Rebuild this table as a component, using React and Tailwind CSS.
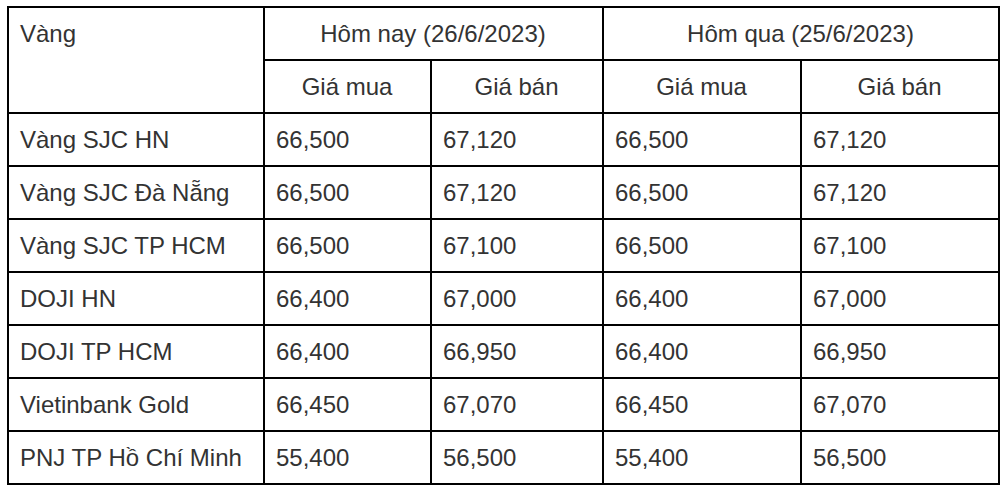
import React from "react";

const rows = [
  ["Vàng SJC HN", "66,500", "67,120", "66,500", "67,120"],
  ["Vàng SJC Đà Nẵng", "66,500", "67,120", "66,500", "67,120"],
  ["Vàng SJC TP HCM", "66,500", "67,100", "66,500", "67,100"],
  ["DOJI HN", "66,400", "67,000", "66,400", "67,000"],
  ["DOJI TP HCM", "66,400", "66,950", "66,400", "66,950"],
  ["Vietinbank Gold", "66,450", "67,070", "66,450", "67,070"],
  ["PNJ TP Hồ Chí Minh", "55,400", "56,500", "55,400", "56,500"],
];

export default function App() {
  const cell = "border-2 border-black pl-[11px] pr-3 py-3 h-[53px] align-middle";
  return (
    <div className="w-[1007px] h-[490px] bg-white pt-[6px] pl-[7px] text-[#333] text-[24px] leading-[27px] [font-family:'Liberation_Sans',Arial,sans-serif]">
      <table className="table-fixed border-collapse w-[991px]">
        <colgroup>
          <col className="w-[256px]" />
          <col className="w-[167px]" />
          <col className="w-[172px]" />
          <col className="w-[198px]" />
          <col className="w-[198px]" />
        </colgroup>
        <thead>
          <tr>
            <th rowSpan={2} className="border-2 border-black pl-[11px] pr-3 pt-3 align-top text-left font-normal">
              Vàng
            </th>
            <th colSpan={2} className={`${cell} text-center font-normal`}>
              Hôm nay (26/6/2023)
            </th>
            <th colSpan={2} className={`${cell} text-center font-normal`}>
              Hôm qua (25/6/2023)
            </th>
          </tr>
          <tr>
            <th className={`${cell} text-center font-normal`}>Giá mua</th>
            <th className={`${cell} text-center font-normal`}>Giá bán</th>
            <th className={`${cell} text-center font-normal`}>Giá mua</th>
            <th className={`${cell} text-center font-normal`}>Giá bán</th>
          </tr>
        </thead>
        <tbody>
          {rows.map((r) => (
            <tr key={r[0]}>
              {r.map((c, i) => (
                <td key={i} className={`${cell} text-left whitespace-nowrap`}>
                  {c}
                </td>
              ))}
            </tr>
          ))}
        </tbody>
      </table>
    </div>
  );
}
